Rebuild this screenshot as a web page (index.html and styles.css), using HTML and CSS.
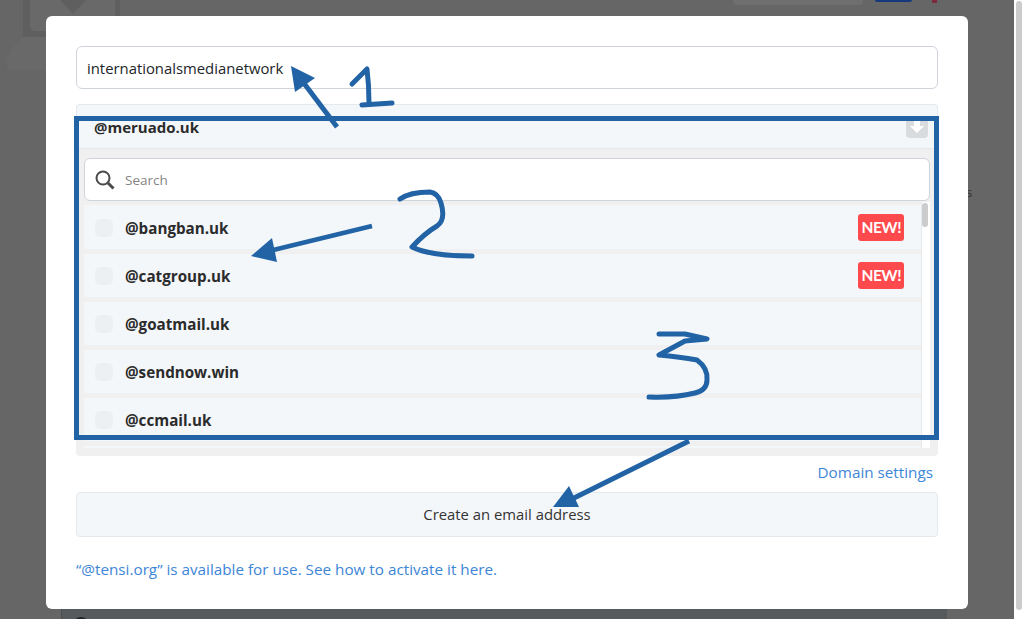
FILE: index.html
```html
<!DOCTYPE html>
<html lang="en">
<head>
<meta charset="UTF-8">
<meta name="viewport" content="width=device-width, initial-scale=1.0">
<title>Create an email address</title>
<link rel="stylesheet" href="styles.css">
</head>
<body>
<div class="screen">
  <div class="backdrop">
    <svg class="bg-logo" width="160" height="80" viewBox="0 0 160 80">
      <path d="M22 37Q2 58 8 70H46V37z" fill="#696969"/>
      <path d="M23 0v37h97V0h-5v26a5 5 0 0 1-5 5H35a5 5 0 0 1-5-5V0z" fill="#5f5f5f"/>
      <path d="M30 0h85v26a5 5 0 0 1-5 5H35a5 5 0 0 1-5-5z" fill="#696969"/>
      <path d="M60 0l13 14L86 0z" fill="#5f5f5f"/>
    </svg>
    <div class="bg-button"></div>
    <div class="bg-pill"></div>
    <div class="bg-flag"></div>
    <span class="bg-letter">s</span>
    <div class="bg-footer">
      <svg width="22" height="10" viewBox="0 0 22 10"><circle cx="10" cy="10" r="7" fill="none" stroke="#222" stroke-width="2"/></svg>
    </div>

    <div class="modal">
      <input class="name-input" type="text" value="internationalsmedianetwork">

      <div class="domain-panel">
        <div class="domain-head">
          <span>@meruado.uk</span>
          <span class="drop-btn">
            <svg width="14" height="14" viewBox="0 0 14 14"><path d="M4 0h6v6h4l-7 7-7-7h4z" fill="#fff"/></svg>
          </span>
        </div>
        <div class="domain-body">
          <div class="search-box">
            <svg width="20" height="20" viewBox="0 0 20 20">
              <circle cx="8" cy="8" r="6.5" fill="none" stroke="#4a4a4a" stroke-width="2"/>
              <path d="M13 13l5.5 5.5" stroke="#4a4a4a" stroke-width="3"/>
            </svg>
            <input type="text" placeholder="Search">
          </div>
          <div class="list-wrap">
            <div class="domain-list">
              <div class="domain-row"><span class="check"></span><b>@bangban.uk</b><span class="new-badge">NEW!</span></div>
              <div class="domain-row"><span class="check"></span><b>@catgroup.uk</b><span class="new-badge">NEW!</span></div>
              <div class="domain-row"><span class="check"></span><b>@goatmail.uk</b></div>
              <div class="domain-row"><span class="check"></span><b>@sendnow.win</b></div>
              <div class="domain-row"><span class="check"></span><b>@ccmail.uk</b></div>
              <div class="domain-row"></div>
            </div>
            <div class="list-scroll"><div class="list-thumb"></div></div>
          </div>
        </div>
      </div>

      <div class="settings-line"><a href="#">Domain settings</a></div>
      <button class="create-btn">Create an email address</button>
      <p class="activate-note"><a href="#">“@tensi.org” is available for use. See how to activate it here.</a></p>
    </div>
  </div>
  <div class="page-scroll"><div class="page-thumb"></div></div>

  <!-- hand drawn notes on top of the screenshot -->
  <svg class="notes" width="1024" height="619" viewBox="0 0 1024 619">
    <rect class="ink" x="76.5" y="118.5" width="860" height="319" stroke-width="5"/>
    <path class="ink" d="M337 127L303 82" stroke-width="5"/>
    <polygon class="ink-fill" points="291,66 315,78 295,92"/>
    <path class="ink round" d="M352 84L367 69Q369 85 369 103M362 105L392 103" stroke-width="5"/>
    <path class="ink" d="M372 226L265 252" stroke-width="4.5"/>
    <polygon class="ink-fill" points="251,256 272,238 277,262"/>
    <path class="ink round" d="M400 199Q410 192 430 192Q438 193 441 203Q446 220 437 226Q425 233 412 247Q430 256 472 256" stroke-width="5"/>
    <path class="ink round" d="M659 334L685 334L707 339L685 341L659 355Q680 357 697 360Q708 368 707 380Q707 390 695 393Q675 398 649 397" stroke-width="5"/>
    <path class="ink" d="M689 441L572 499" stroke-width="5"/>
    <polygon class="ink-fill" points="569,486 553,507 579,507"/>
  </svg>
</div>
</body>
</html>
```

FILE: styles.css
```css
* { box-sizing: border-box; }
html, body { margin: 0; padding: 0; overflow: hidden; }
body { font-family: "Open Sans", Arial, sans-serif; font-size: 15.25px; color: #2b2b2b; }
a { color: #3d86d6; text-decoration: none; }

.screen { position: relative; display: flex; width: 1024px; height: 619px; }
.backdrop { position: relative; width: 1014px; height: 619px; padding: 16px 46px 10px; background: #666; overflow: hidden; }
.page-scroll { width: 10px; height: 619px; background: #fff; padding: 1px 2px 0 2px; }
.page-thumb { height: 609px; background: #ccc; border-radius: 3px; }

.bg-logo { position: absolute; left: 0; top: 0; }
.bg-button { position: absolute; left: 733px; top: 0; width: 130px; height: 5px; background: #6f6f6f; border-radius: 0 0 4px 4px; }
.bg-pill { position: absolute; left: 875px; top: 0; width: 37px; height: 2px; background: #16397c; border-radius: 0 0 6px 6px; }
.bg-flag { position: absolute; left: 932px; top: 0; width: 5px; height: 3px; background: #7a2a3c; }
.bg-letter { position: absolute; left: 966px; top: 183px; font-size: 13px; color: #333; }
.bg-footer { position: absolute; left: 61px; top: 609px; width: 886px; height: 10px; padding-left: 9px; background: #565a5c; border-left: 1px solid #484c4e; }

.modal { position: relative; width: 922px; height: 593px; padding: 30px; background: #fff; border-radius: 6px; }
.name-input { display: block; width: 100%; height: 43px; padding: 0 10px; font: 14.85px "Open Sans", Arial, sans-serif; color: #212529; border: 1px solid #ced4da; border-radius: 6px; outline: none; }

.domain-panel { margin-top: 15px; height: 352px; background: #f0f0f0; border-radius: 4px; }
.domain-head { display: flex; justify-content: space-between; align-items: center; height: 45px; padding: 0 9px 0 17px; background: #f4f7fa; border: 1px solid #e4e9ed; border-radius: 4px 4px 0 0; font-size: 15px; font-weight: 700; }
.drop-btn { display: flex; align-items: center; justify-content: center; width: 22px; height: 22px; background: #d9dcdf; border-radius: 4px; }
.domain-body { padding: 9px 8px 8px; }

.search-box { display: flex; align-items: center; gap: 10px; height: 43px; padding: 0 10px; background: #fff; border: 1px solid #ced4da; border-radius: 6px; }
.search-box input { flex: 1; border: 0; outline: none; padding: 0; font: 13.5px "Open Sans", Arial, sans-serif; }
.search-box input::placeholder { color: #858585; opacity: 1; }

.list-wrap { display: flex; height: 246px; margin-top: 1px; }
.domain-list { flex: 1; padding-top: 3px; overflow: hidden; }
.domain-row { display: flex; align-items: center; height: 43px; margin-bottom: 5px; padding: 0 17px 0 11px; background: #f4f7fa; font-size: 15.2px; }
.domain-row:first-child { height: 44px; padding-top: 1px; }
.domain-row b { font-weight: 700; }
.check { width: 18px; height: 18px; margin-right: 12px; background: #edf0f3; border-radius: 5px; }
.new-badge { margin-left: auto; padding: 0 3px; height: 27px; background: #ff4a4d; color: #fff; font: 700 15.5px/27px Lato, Arial, sans-serif; letter-spacing: -0.5px; border-radius: 3px; }
.list-scroll { width: 9px; background: #fff; border-left: 1px solid #e6e9ec; padding: 1px 2px 0 0; }
.list-thumb { width: 6px; height: 24px; background: #ccc; border-radius: 3px; }

.settings-line { height: 36px; padding: 5px 5px 0 0; text-align: right; line-height: 22px; }
.create-btn { display: block; width: 100%; height: 45px; padding: 0 0 2px; background: #f4f7fa; border: 1px solid #e4e9ed; border-radius: 4px; font: 14.85px "Open Sans", Arial, sans-serif; color: #333; }
.activate-note { margin: 21px 0 0; line-height: 22px; }

.notes { position: absolute; left: 0; top: 0; pointer-events: none; }
.ink { fill: none; stroke: #2263a5; }
.ink-fill { fill: #2263a5; }
.round { stroke-linecap: round; stroke-linejoin: round; }
```
